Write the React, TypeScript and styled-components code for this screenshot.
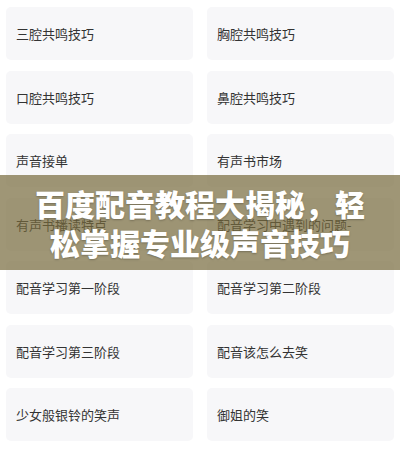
import React from 'react';
import styled, { createGlobalStyle } from 'styled-components';

const items = [
  '三腔共鸣技巧',
  '胸腔共鸣技巧',
  '口腔共鸣技巧',
  '鼻腔共鸣技巧',
  '声音接单',
  '有声书市场',
  '有声书播读特点',
  '配音学习中遇到的问题-',
  '配音学习第一阶段',
  '配音学习第二阶段',
  '配音学习第三阶段',
  '配音该怎么去笑',
  '少女般银铃的笑声',
  '御姐的笑',
];

function App() {
  return (
    <Page>
      <GlobalStyle />
      <Grid>
        {items.map((t) => (
          <Card key={t}>{t}</Card>
        ))}
      </Grid>
      <Banner>
        <Title>百度配音教程大揭秘，轻松掌握专业级声音技巧</Title>
      </Banner>
    </Page>
  );
}

export default App;

const GlobalStyle = createGlobalStyle`
  html, body {
    margin: 0;
    padding: 0;
    background: #ffffff;
  }
  body {
    font-family: "Noto Sans CJK SC", "Noto Sans", sans-serif;
  }
`;

const Page = styled.div`
  position: relative;
  width: 400px;
  height: 450px;
  overflow: hidden;
  background: #ffffff;
`;

const Grid = styled.ul`
  display: grid;
  grid-template-columns: 187px 187px;
  grid-auto-rows: 53px;
  column-gap: 14px;
  row-gap: 10.5px;
  margin: 0;
  padding: 7px 6px 0;
  list-style: none;
`;

const Card = styled.li`
  display: flex;
  align-items: center;
  padding: 0 10px;
  background: #f7f7f9;
  border-radius: 5px;
  color: #333333;
  font-size: 13px;
  white-space: nowrap;
  overflow: hidden;
`;

const Banner = styled.div`
  position: absolute;
  left: 0;
  right: 0;
  top: 175px;
  height: 95px;
  display: flex;
  align-items: center;
  justify-content: center;
  padding: 0 25px;
  background: rgba(118, 106, 60, 0.7);
`;

const Title = styled.h1`
  margin: 0;
  color: #ffffff;
  font-size: 30px;
  font-weight: 900;
  line-height: 39px;
  text-align: center;
  text-shadow: 0 1px 2px rgba(0, 0, 0, 0.25);
`;
